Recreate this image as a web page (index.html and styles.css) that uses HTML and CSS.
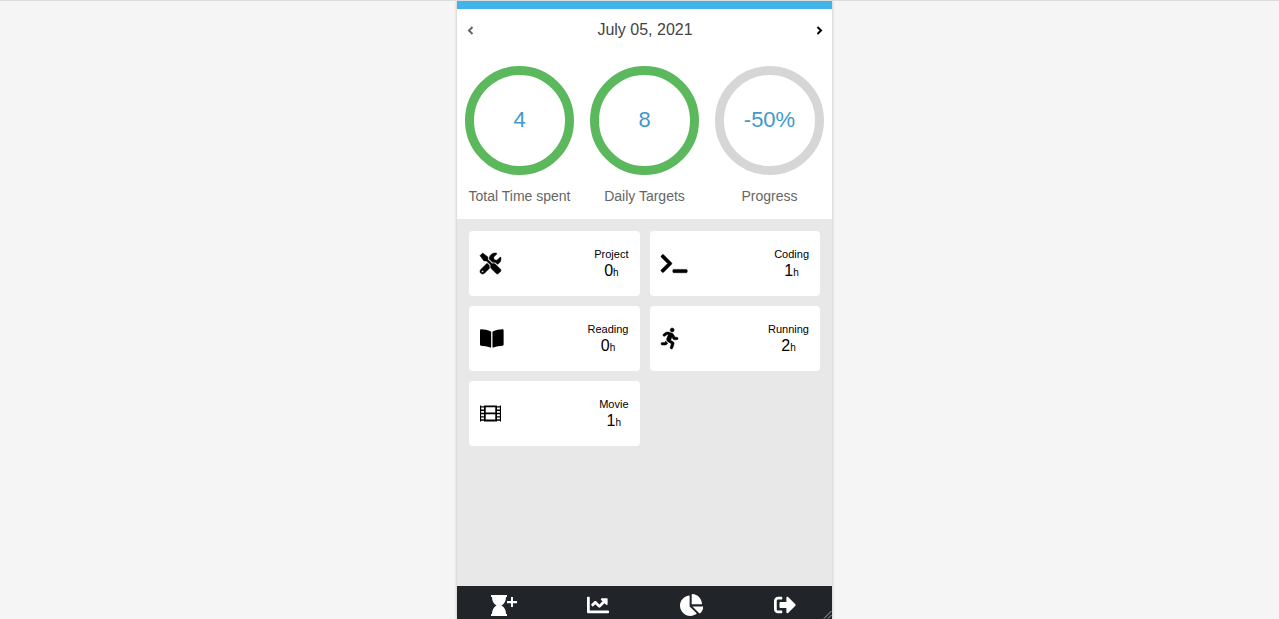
FILE: index.html
```html
<!DOCTYPE html>
<html lang="en">
<head>
<meta charset="utf-8">
<meta name="viewport" content="width=device-width, initial-scale=1">
<title>Daily tracker</title>
<link rel="stylesheet" href="styles.css">
</head>
<body class="page">
<div class="app">
  <header class="summary">
    <div class="date-bar">
      <button class="date-button" type="button" aria-label="Previous day"><svg class="chevron" viewBox="0 0 7 9"><path d="M5.500 1 2 4.500 5.500 8"/></svg></button>
      <h1 class="date">July 05, 2021</h1>
      <button class="date-button date-button-next" type="button" aria-label="Next day"><svg class="chevron" viewBox="0 0 7 9"><path d="M1.500 1 5 4.500 1.500 8"/></svg></button>
    </div>
    <div class="stats">
      <div class="stat"><div class="ring">4</div><div class="stat-label">Total Time spent</div></div>
      <div class="stat"><div class="ring">8</div><div class="stat-label">Daily Targets</div></div>
      <div class="stat"><div class="ring ring-muted">-50%</div><div class="stat-label">Progress</div></div>
    </div>
  </header>
  <main class="cards">
    <article class="card">
      <svg class="icon icon-bold" viewBox="0 0 512 512"><path d="M501.1 395.7L384 278.6c-23.1-23.1-57.6-27.6-85.4-13.9L192 158.1V96L64 0 0 64l96 128h62.1l106.6 106.6c-13.6 27.8-9.2 62.3 13.9 85.4l117.1 117.1c14.6 14.6 38.2 14.6 52.7 0l52.7-52.7c14.5-14.6 14.5-38.2 0-52.7zM331.7 225c28.3 0 54.9 11 74.9 31l19.4 19.4c15.8-6.9 30.8-16.5 43.8-29.5 37.1-37.1 49.7-89.3 37.9-136.7-2.2-9-13.5-12.1-20.1-5.5l-74.4 74.4-67.9-11.3L334 98.9l74.4-74.4c6.6-6.6 3.4-17.9-5.7-20.2-47.4-11.7-99.6.9-136.6 37.9-28.5 28.5-41.9 66.1-41.2 103.6l82.1 82.1c8.1-1.9 16.5-2.9 24.7-2.9zm-103.9 82l-56.7-56.7L18.700 402.800c-25 25-25 65.500 0 90.500s65.500 25 90.500 0l123.600-123.600c-7.600-19.900-9.900-41.600-5-62.700zM64 472c-13.200 0-24-10.800-24-24 0-13.300 10.700-24 24-24s24 10.700 24 24c0 13.200-10.700 24-24 24z"/></svg>
      <div class="card-text"><h2 class="card-name">Project</h2><p class="card-value">0<span class="unit">h</span></p></div>
    </article>
    <article class="card">
      <svg class="icon icon-bold" viewBox="0 0 640 512"><path d="M257.981 272.971L63.638 467.314c-9.373 9.373-24.569 9.373-33.941 0L7.029 444.647c-9.357-9.357-9.375-24.522-.04-33.901L161.011 256 6.990 101.255c-9.335-9.379-9.317-24.544.04-33.901l22.667-22.667c9.373-9.373 24.569-9.373 33.941 0L257.981 239.030c9.373 9.372 9.373 24.568 0 33.941zM640 456v-32c0-13.255-10.745-24-24-24H312c-13.255 0-24 10.745-24 24v32c0 13.255 10.745 24 24 24h304c13.255 0 24-10.745 24-24z"/></svg>
      <div class="card-text"><h2 class="card-name">Coding</h2><p class="card-value">1<span class="unit">h</span></p></div>
    </article>
    <article class="card">
      <svg class="icon" viewBox="0 0 576 512"><path d="M542.22 32.05c-54.8 3.11-163.72 14.43-230.96 55.59-4.64 2.84-7.27 7.89-7.27 13.17v363.87c0 11.55 12.63 18.85 23.28 13.49 69.18-34.82 169.23-44.32 218.7-46.92 16.89-.89 30.02-14.43 30.02-30.66V62.75c.01-17.71-15.35-31.74-33.77-30.7zM264.73 87.64C197.5 46.48 88.58 35.17 33.78 32.05 15.36 31.01 0 45.04 0 62.75V400.6c0 16.24 13.13 29.78 30.02 30.66 49.49 2.6 149.59 12.11 218.77 46.95 10.62 5.35 23.21-1.94 23.21-13.46V100.63c0-5.29-2.62-10.14-7.27-12.99z"/></svg>
      <div class="card-text"><h2 class="card-name">Reading</h2><p class="card-value">0<span class="unit">h</span></p></div>
    </article>
    <article class="card">
      <svg class="icon icon-bold" viewBox="0 0 416 512"><path d="M272 96c26.51 0 48-21.49 48-48S298.51 0 272 0s-48 21.49-48 48 21.49 48 48 48zM113.69 317.47l-14.8 34.52H32c-17.67 0-32 14.33-32 32s14.33 32 32 32h77.45c19.25 0 36.58-11.44 44.11-29.09l8.79-20.52-10.67-6.3c-17.32-10.23-30.06-25.37-37.99-42.61zM384 223.99h-44.03l-26.06-53.25c-12.5-25.55-35.45-44.23-61.78-50.94l-71.08-21.14c-28.3-6.8-57.77-.55-80.84 17.14l-39.67 30.41c-14.03 10.75-16.69 30.83-5.94 44.86s30.84 16.69 44.86 5.94l39.66-30.41c7.67-5.89 17.44-8 25.27-6.14l14.7 4.37-37.46 87.39c-12.62 29.48-1.31 64.01 26.3 80.31l84.98 50.17-27.47 87.73c-5.28 16.86 4.11 34.82 20.97 40.09 3.19 1 6.41 1.48 9.58 1.48 13.61 0 26.23-8.77 30.52-22.45l31.64-101.06c5.91-20.77-2.89-43.08-21.64-54.39l-61.24-36.14 31.31-78.28 20.27 41.43c8 16.34 24.92 26.89 43.11 26.89H384c17.67 0 32-14.33 32-32s-14.33-31.99-32-31.99z"/></svg>
      <div class="card-text"><h2 class="card-name">Running</h2><p class="card-value">2<span class="unit">h</span></p></div>
    </article>
    <article class="card">
      <svg class="icon" viewBox="0 0 22 22"><path fill-rule="evenodd" d="M0 2.500h1.200v.8h3v-.8h13.600v.8h3v-.8H22v16.800h-1.200v-.8h-3v.8H4.200v-.8h-3v.8H0zM1.200 4.800v2h3v-2zM1.200 8.300v2h3v-2zM1.200 11.800v2h3v-2zM1.200 15.200v1.800h3v-1.800zM17.800 4.800v2h3v-2zM17.800 8.300v2h3v-2zM17.800 11.800v2h3v-2zM17.800 15.200v1.800h3v-1.800zM6 4.500v5.400h10V4.500zM6 11.900v5.400h10v-5.400z"/></svg>
      <div class="card-text"><h2 class="card-name">Movie</h2><p class="card-value">1<span class="unit">h</span></p></div>
    </article>
  </main>
  <nav class="tabs" aria-label="Main">
    <a class="tab" href="#add" aria-label="Add time"><svg class="icon" viewBox="0 0 27 22"><path d="M1 1h16v2h-1c0 4-1.500 6.500-4.500 8.500 3 2 4.500 4.500 4.500 8.500h1v2H1v-2h1c0-4 1.500-6.500 4.500-8.500C3.500 9.500 2 7 2 3H1zM21 3h2v4h4v2.200h-4V13h-2V9.200h-4V7h4z"/></svg></a>
    <a class="tab" href="#trends" aria-label="Trends"><svg class="icon" viewBox="0 0 512 512"><path d="M496 384H64V80c0-8.840-7.160-16-16-16H16C7.160 64 0 71.160 0 80v336c0 17.670 14.330 32 32 32h464c8.840 0 16-7.160 16-16v-32c0-8.840-7.160-16-16-16zM464 96H345.940c-21.380 0-32.090 25.850-16.970 40.970l32.400 32.400L288 242.750l-73.370-73.370c-12.500-12.500-32.760-12.500-45.250 0l-68.690 68.690c-6.250 6.250-6.250 16.380 0 22.630l22.620 22.620c6.250 6.250 16.380 6.250 22.630 0L192 237.250l73.370 73.370c12.500 12.500 32.760 12.500 45.250 0l96-96 32.400 32.400c15.120 15.120 40.970 4.410 40.970-16.970V112c.01-8.840-7.150-16-15.990-16z"/></svg></a>
    <a class="tab" href="#breakdown" aria-label="Breakdown"><svg class="icon" viewBox="0 0 544 512"><path d="M527.790 288H290.500l158.030 158.030c6.040 6.040 15.980 6.530 22.190.68 38.700-36.460 65.320-85.610 73.130-140.860 1.340-9.460-6.510-17.850-16.060-17.850zm-15.830-64.800C503.720 103.740 408.260 8.280 288.800.04 279.680-.59 272 7.100 272 16.240V240h223.770c9.140 0 16.820-7.680 16.190-16.800zM224 288V50.710c0-9.550-8.390-17.400-17.840-16.060C86.990 51.490-4.100 155.600.14 280.370 4.500 408.510 114.830 513.590 243.030 511.980c50.400-.63 96.970-16.870 135.260-44.030 7.900-5.600 8.420-17.230 1.570-24.080L224 288z"/></svg></a>
    <a class="tab" href="#logout" aria-label="Log out"><svg class="icon" viewBox="0 0 512 512"><path d="M497 273L329 441c-15 15-41 4.500-41-17v-96H152c-13.300 0-24-10.700-24-24v-96c0-13.300 10.700-24 24-24h136V88c0-21.400 25.900-32 41-17l168 168c9.300 9.400 9.300 24.600 0 34zM192 436v-40c0-6.600-5.400-12-12-12H96c-17.700 0-32-14.300-32-32V160c0-17.700 14.300-32 32-32h84c6.600 0 12-5.400 12-12V76c0-6.600-5.400-12-12-12H96c-53 0-96 43-96 96v192c0 53 43 96 96 96h84c6.600 0 12-5.400 12-12z"/></svg></a>
    <svg class="grip" viewBox="0 0 9 9"><path d="M1 8.500 8.500 1M5 8.500 8.500 5"/></svg>
  </nav>
</div>
</body>
</html>
```
FILE: styles.css
```css
* { box-sizing: border-box; }

.page {
  margin: 0;
  min-height: 100vh;
  padding-left: 10px;
  border-top: 1px solid #dddddd;
  background: #f5f5f5;
  font-family: "Liberation Sans", Arial, sans-serif;
  color: #000;
  display: flex;
  justify-content: center;
}

.app {
  width: 100%;
  max-width: 375px;
  display: flex;
  flex-direction: column;
  background: #e8e8e8;
  box-shadow: 0 0 3px rgba(0, 0, 0, 0.25);
}

.summary {
  background: #fff;
  border-top: 8px solid #42b4e9;
  padding-bottom: 14px;
}

.date-bar {
  display: flex;
  align-items: center;
  justify-content: space-between;
  padding: 11px 9px 9px 10px;
}

.date-button {
  display: flex;
  padding: 0;
  border: 0;
  background: none;
  color: #666;
  cursor: pointer;
}

.date-button-next { color: #000; }

.chevron {
  width: 7px;
  height: 9px;
  fill: none;
  stroke: currentColor;
  stroke-width: 2;
}

.date {
  margin: 0;
  font-size: 16px;
  font-weight: 400;
  line-height: 20px;
  color: #444;
}

.stats {
  display: grid;
  grid-template-columns: repeat(3, 1fr);
  padding-top: 17px;
}

.stat { padding: 0 8px; }

.ring {
  display: flex;
  align-items: center;
  justify-content: center;
  aspect-ratio: 1;
  padding-bottom: 2px;
  border: 9px solid #5cb85c;
  border-radius: 50%;
  font-size: 22px;
  color: #4199cc;
}

.ring-muted { border-color: #d6d6d6; }

.stat-label {
  padding-top: 12px;
  font-size: 14px;
  line-height: 18px;
  text-align: center;
  white-space: nowrap;
  color: #666;
}

.cards {
  flex: 1;
  display: grid;
  grid-template-columns: 1fr 1fr;
  align-content: start;
  gap: 10px;
  padding: 12px;
}

.card {
  display: flex;
  align-items: center;
  justify-content: space-between;
  min-height: 65px;
  padding: 0 11px;
  border-radius: 4px;
  background: #fff;
}

.icon {
  display: block;
  height: 21px;
  fill: currentColor;
}

.icon-bold {
  overflow: visible;
  stroke: currentColor;
  stroke-width: 12;
  stroke-linejoin: round;
}

.card-text {
  padding-top: 2px;
  text-align: center;
}

.card-name {
  margin: 0;
  font-size: 11px;
  font-weight: 400;
  line-height: 14px;
}

.card-value {
  margin: 0;
  font-size: 16px;
  line-height: 20px;
}

.unit { font-size: 10px; }

.tabs {
  position: relative;
  display: grid;
  grid-template-columns: repeat(4, 1fr);
  height: 33px;
  padding-top: 8px;
  background: #212529;
  color: #fff;
}

.tab {
  display: flex;
  justify-content: center;
  color: inherit;
}

.tab .icon { height: 22px; }

.grip {
  position: absolute;
  right: 0;
  bottom: 0;
  width: 9px;
  height: 9px;
  fill: none;
  stroke: #aaa;
}
```
